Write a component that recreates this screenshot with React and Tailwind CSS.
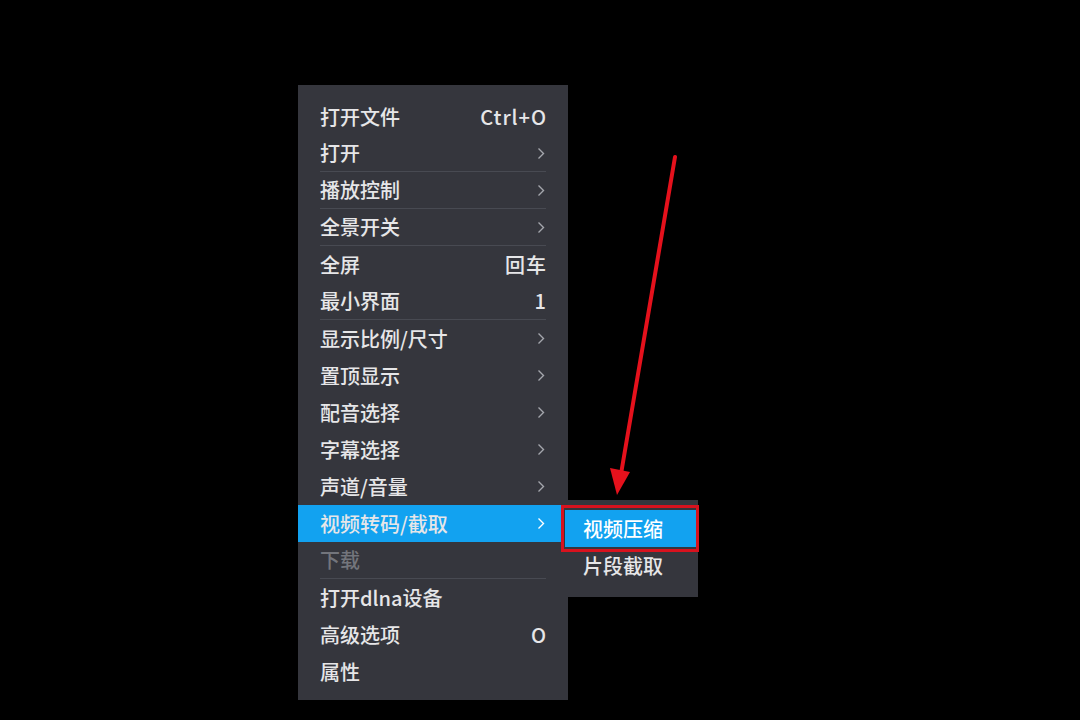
import React from "react";

const ITEMS = [
  { label: "打开文件", right: "Ctrl+O" },
  { label: "打开", sub: true, sep: true },
  { label: "播放控制", sub: true, sep: true },
  { label: "全景开关", sub: true, sep: true },
  { label: "全屏", right: "回车" },
  { label: "最小界面", right: "1", sep: true },
  { label: "显示比例/尺寸", sub: true },
  { label: "置顶显示", sub: true },
  { label: "配音选择", sub: true },
  { label: "字幕选择", sub: true },
  { label: "声道/音量", sub: true },
  { label: "视频转码/截取", sub: true, active: true },
  { label: "下载", disabled: true, sep: true },
  { label: "打开dlna设备" },
  { label: "高级选项", right: "O" },
  { label: "属性" },
];

function Chevron() {
  return (
    <svg width="8" height="13" viewBox="0 0 8 13" fill="none">
      <path d="M1.5 1.5 L6.5 6.5 L1.5 11.5" stroke="currentColor" strokeWidth="1.4" />
    </svg>
  );
}

function MenuRow({ label, right, sub, sep, active, disabled }) {
  return (
    <div className={`h-[37px] px-[22px] ${active ? "bg-[#12a2f0]" : ""}`}>
      <div
        className={`h-full flex items-center justify-between ${
          sep ? "border-b border-[#484a52]" : ""
        }`}
      >
        <span className={disabled ? "text-[#73757c]" : "text-[#e6e6e8]"}>{label}</span>
        {right && <span className="text-[#e6e6e8] tracking-[1px] -mr-[1px]">{right}</span>}
        {sub && (
          <span className={`mr-[1px] ${active ? "text-white" : "text-[#a4a6ac]"}`}>
            <Chevron />
          </span>
        )}
      </div>
    </div>
  );
}

export default function App() {
  return (
    <div
      className="relative w-[1080px] h-[720px] bg-black overflow-hidden text-[20px] font-medium"
      style={{ fontFamily: '"Noto Sans CJK SC", "Noto Sans", sans-serif' }}
    >
      <div className="absolute left-[298px] top-[85px] w-[270px] bg-[#35363d] pt-[13px] pb-[10px]">
        {ITEMS.map((item) => (
          <MenuRow key={item.label} {...item} />
        ))}
      </div>

      <div className="absolute left-[563px] top-[500px] w-[135px] bg-[#35363d] pt-[10px] pb-[13px]">
        <div className="h-[37px] mx-[2px] pl-[18px] flex items-center bg-[#12a2f0] text-white">
          视频压缩
        </div>
        <div className="h-[37px] pl-[20px] flex items-center text-[#e6e6e8]">片段截取</div>
      </div>

      <div className="absolute left-[561px] top-[505px] w-[138px] h-[47px] border-[3px] border-[#d8121e]" />

      <svg className="absolute left-0 top-0" width="1080" height="720" viewBox="0 0 1080 720">
        <line x1="675" y1="157" x2="621" y2="474" stroke="#e5111c" strokeWidth="4" strokeLinecap="round" />
        <polygon points="610,468 630,472 617,495" fill="#e5111c" />
      </svg>
    </div>
  );
}
